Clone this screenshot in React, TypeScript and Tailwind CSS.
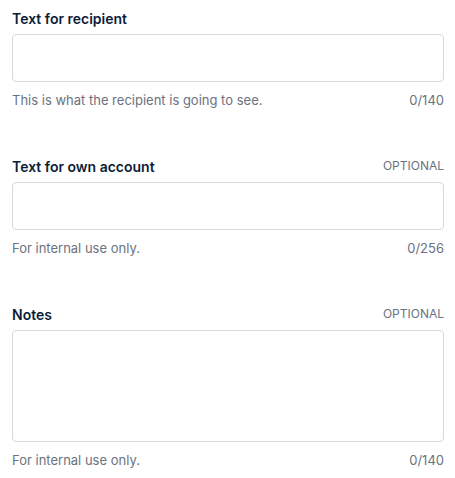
import React from "react";

interface FieldProps {
  label: string;
  optional?: boolean;
  helper: string;
  counter: string;
  multiline?: boolean;
}

const Field: React.FC<FieldProps> = ({ label, optional, helper, counter, multiline }) => {
  return (
    <div className="flex flex-col">
      <div className="flex h-5 items-center justify-between">
        <span className="text-[14px] font-semibold text-[#0c1d36]">{label}</span>
        {optional && <span className="text-[12px] text-[#6b7280]">OPTIONAL</span>}
      </div>
      {multiline ? (
        <textarea className="mt-1.5 h-[112px] w-full resize-none rounded-[4px] border border-[#d5d9de] bg-white" />
      ) : (
        <input className="mt-1.5 h-[48px] w-full rounded-[4px] border border-[#d5d9de] bg-white" />
      )}
      <div className="mt-[9px] flex h-5 items-center justify-between text-[13px] text-[#6b7280]">
        <span>{helper}</span>
        <span>{counter}</span>
      </div>
    </div>
  );
};

export default function App() {
  return (
    <div
      className="flex min-h-[478px] w-[455px] flex-col gap-[45px] bg-white pl-3 pr-[11px] pt-2"
      style={{ fontFamily: "Inter, 'Noto Sans', sans-serif" }}
    >
      <Field
        label="Text for recipient"
        helper="This is what the recipient is going to see."
        counter="0/140"
      />
      <Field
        label="Text for own account"
        optional
        helper="For internal use only."
        counter="0/256"
      />
      <Field label="Notes" optional helper="For internal use only." counter="0/140" multiline />
    </div>
  );
}
